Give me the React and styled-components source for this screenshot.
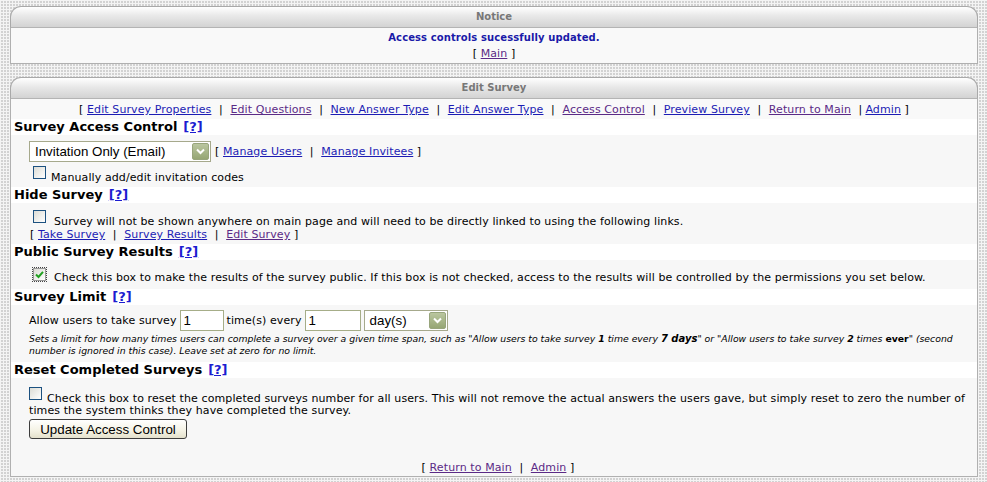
import React from "react";
import styled, { createGlobalStyle } from "styled-components";

const GlobalStyle = createGlobalStyle`
  body {
    margin: 0;
    background-color: #d2d2d2;
    background-image:
      linear-gradient(#f4f4f4 1px, transparent 1px),
      linear-gradient(90deg, #f4f4f4 1px, transparent 1px);
    background-size: 3px 3px;
    font-family: "DejaVu Sans", Verdana, sans-serif;
    font-size: 11px;
    letter-spacing: 0.1px;
    color: #000;
  }
`

const Page = styled.div`
  display: flex;
  flex-direction: column;
  gap: 13px;
  padding: 6px 9px 6px 10px;
`

const Panel = styled.div`
  display: flex;
  flex-direction: column;
`

const PanelHead = styled.div`
  height: 20px;
  line-height: 19px;
  text-align: center;
  border: 1px solid #a9a9a9;
  border-bottom: 1px solid #b4b4b4;
  border-radius: 11px 11px 0 0;
  background: linear-gradient(#ffffff, #e8e8e8 45%, #d3d3d3);
  color: #777;
  font-weight: bold;
  font-size: 10px;
  letter-spacing: 0;
`

const PanelBody = styled.div`
  border: 1px solid #b0b0b0;
  border-top: none;
  background: #f9f9f9;
`

const NoticeBody = styled.div`
  padding: 2px 0 1px;
  text-align: center;
  line-height: 16px;
`

const Message = styled.div`
  color: #1a1aa8;
  font-weight: bold;
  font-size: 10px;
`

const Link = styled.a`
  color: ${p => (p.$visited ? "#5b2a86" : "#1c1cb4")};
  text-decoration: underline;
  cursor: pointer;
`

const Help = styled.a`
  color: #1c1cd0;
  text-decoration: underline;
  font-weight: bold;
  margin-left: 6px;
`

const Sep = styled.span`
  margin: ${p => (p.$tight ? "0 3px 0 7.6px" : "0 7.6px")};
`

const Nav = styled.div`
  text-align: center;
  height: 18px;
  line-height: 18px;
  padding-top: 2px;
`

const Heading = styled.div`
  background: #fff;
  height: 16px;
  line-height: 16px;
  padding-left: 3px;
  font-weight: bold;
  font-size: 13px;
  letter-spacing: 0;
`

const Content = styled.div`
  background: #f7f7f7;
  padding: ${p => p.$pad};
  display: flex;
  flex-direction: column;
  align-items: flex-start;
`

const Row = styled.div`
  display: flex;
  align-items: center;
  gap: ${p => p.$gap || "4px"};
  margin-bottom: ${p => p.$after || "0px"};
`

const Para = styled.div`
  line-height: 12px;
  padding-left: ${p => p.$indent || "0px"};
`

const LinkLine = styled.div`
  line-height: 13px;
  padding-left: 1px;
`

const Box = styled.span`
  display: inline-flex;
  box-sizing: border-box;
  width: 13px;
  height: 13px;
  vertical-align: 2px;
  margin-right: ${p => p.$gap}px;
  border: 1px solid ${p => (p.$checked ? "#9a9a9a" : "#1c5180")};
  background: linear-gradient(135deg, #dcdcd5, #ffffff);
  align-items: center;
  justify-content: center;
  outline: ${p => (p.$checked ? "1px dotted #444" : "none")};
`

const Checkbox = ({ checked, gap = 5 }) => (
  <Box $checked={checked} $gap={gap}>
    {checked && (
      <svg width="9" height="9" viewBox="0 0 9 9">
        <path d="M1 4.5 L3.5 7 L8 1.8" fill="none" stroke="#21a121" strokeWidth="2" />
      </svg>
    )}
  </Box>
)

const SelectBox = styled.div`
  box-sizing: border-box;
  width: ${p => p.$w}px;
  height: 21px;
  border: 1px solid #a6a98c;
  background: #fff;
  display: flex;
  align-items: center;
  justify-content: space-between;
  padding: 0 1px 0 5px;
  font-family: "Liberation Sans", Arial, sans-serif;
  font-size: 13.33px;
  letter-spacing: 0;
`

const Arrow = styled.span`
  box-sizing: border-box;
  width: 17px;
  height: 17px;
  border: 1px solid #98a57c;
  border-radius: 2px;
  background: linear-gradient(#bac69f, #96a674);
  display: inline-flex;
  align-items: center;
  justify-content: center;
`

const Select = ({ width, value }) => (
  <SelectBox $w={width}>
    <span>{value}</span>
    <Arrow>
      <svg width="9" height="7" viewBox="0 0 9 7">
        <path d="M1 1.5 L4.5 5 L8 1.5" fill="none" stroke="#fff" strokeWidth="2" />
      </svg>
    </Arrow>
  </SelectBox>
)

const TextInput = styled.div`
  box-sizing: border-box;
  width: ${p => p.$w}px;
  height: 21px;
  border: 1px solid #a6ad88;
  background: #fff;
  padding: 0 3px;
  line-height: 19px;
  font-family: "Liberation Sans", Arial, sans-serif;
  font-size: 13.33px;
  letter-spacing: 0;
`

const Note = styled.div`
  font-style: italic;
  font-size: 9.3px;
  line-height: 12px;
  letter-spacing: 0;
  margin-top: 2px;
  white-space: nowrap;
  b { font-style: italic; }
  .big { font-size: 10px; }
  .up { font-style: normal; }
`

const Button = styled.button`
  margin-top: 2px;
  width: 158px;
  height: 20px;
  border: 1px solid #3d3d3d;
  border-radius: 3px;
  background: linear-gradient(#ffffff, #f4f2e4 60%, #e4e1cc);
  font-family: "Liberation Sans", Arial, sans-serif;
  font-size: 13.33px;
  padding: 0;
  color: #000;
`

const Footer = styled.div`
  align-self: stretch;
  text-align: center;
  line-height: 14px;
  padding: 22px 0 1px;
`

const Section = ({ title, children }) => (
  <>
    <Heading>
      {title}
      <Help>[?]</Help>
    </Heading>
    {children}
  </>
)

export default function App() {
  return (
    <>
      <GlobalStyle />
      <Page>
        <Panel>
          <PanelHead>Notice</PanelHead>
          <PanelBody>
            <NoticeBody>
              <Message>Access controls sucessfully updated.</Message>
              <div>
                [ <Link $visited>Main</Link> ]
              </div>
            </NoticeBody>
          </PanelBody>
        </Panel>

        <Panel>
          <PanelHead>Edit Survey</PanelHead>
          <PanelBody>
            <Nav>
              [ <Link>Edit Survey Properties</Link><Sep>|</Sep>
              <Link $visited>Edit Questions</Link><Sep>|</Sep>
              <Link>New Answer Type</Link><Sep>|</Sep>
              <Link>Edit Answer Type</Link><Sep>|</Sep>
              <Link $visited>Access Control</Link><Sep>|</Sep>
              <Link>Preview Survey</Link><Sep>|</Sep>
              <Link $visited>Return to Main</Link><Sep $tight>|</Sep>
              <Link>Admin</Link> ]
            </Nav>

            <Section title="Survey Access Control">
              <Content $pad="6px 0 3px 18px">
                <Row $after="4px">
                  <Select width={182} value="Invitation Only (Email)" />
                  <span>
                    [ <Link>Manage Users</Link><Sep>|</Sep><Link>Manage Invitees</Link> ]
                  </span>
                </Row>
                <Para $indent="4px">
                  <Checkbox gap={5} />Manually add/edit invitation codes
                </Para>
              </Content>
            </Section>

            <Section title="Hide Survey">
              <Content $pad="7px 0 3px 18px">
                <Para $indent="4px">
                  <Checkbox gap={8} />Survey will not be shown anywhere on main page and will need to be directly linked to using the following links.
                </Para>
                <LinkLine>
                  [ <Link>Take Survey</Link><Sep>|</Sep><Link>Survey Results</Link><Sep>|</Sep><Link $visited>Edit Survey</Link> ]
                </LinkLine>
              </Content>
            </Section>

            <Section title="Public Survey Results">
              <Content $pad="8px 0 5px 18px">
                <Para $indent="4px">
                  <Checkbox checked gap={8} />Check this box to make the results of the survey public. If this box is not checked, access to the results will be controlled by the permissions you set below.
                </Para>
              </Content>
            </Section>

            <Section title="Survey Limit">
              <Content $pad="5px 0 5px 18px">
                <Row $gap="3px">
                  <span>Allow users to take survey</span>
                  <TextInput $w={44}>1</TextInput>
                  <span>time(s) every</span>
                  <TextInput $w={56}>1</TextInput>
                  <Select width={84} value="day(s)" />
                </Row>
                <Note>
                  Sets a limit for how many times users can complete a survey over a given time span, such as "Allow users to take survey <b>1</b> time every <b className="big">7 days</b>" or "Allow users to take survey <b>2</b> times <b className="up">ever</b>" (second
                  <br />
                  number is ignored in this case). Leave set at zero for no limit.
                </Note>
              </Content>
            </Section>

            <Section title="Reset Completed Surveys">
              <Content $pad="9px 10px 0 18px">
                <Para>
                  <Checkbox gap={5} />Check this box to reset the completed surveys number for all users. This will not remove the actual answers the users gave, but simply reset to zero the number of times the system thinks they have completed the survey.
                </Para>
                <Button>Update Access Control</Button>
                <Footer>
                  [ <Link $visited>Return to Main</Link><Sep>|</Sep><Link $visited>Admin</Link> ]
                </Footer>
              </Content>
            </Section>
          </PanelBody>
        </Panel>
      </Page>
    </>
  );
}
